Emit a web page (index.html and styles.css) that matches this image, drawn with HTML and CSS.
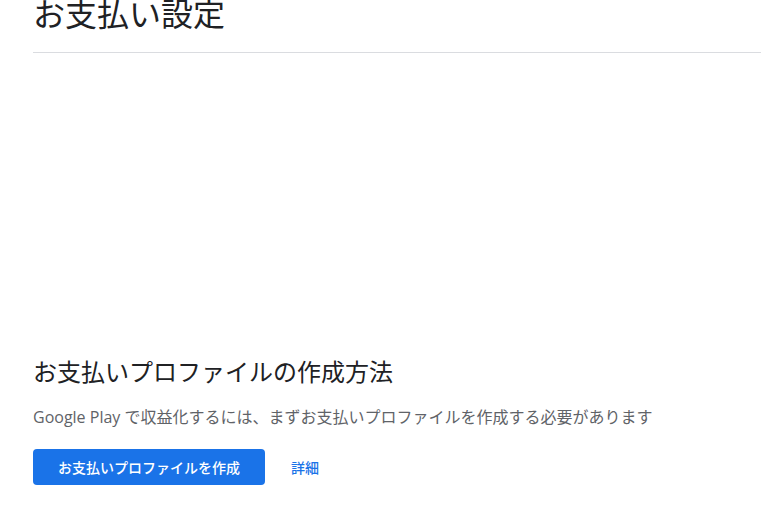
FILE: index.html
```html
<!DOCTYPE html>
<html lang="ja">
<head>
<meta charset="utf-8">
<title>お支払い設定</title>
<link rel="stylesheet" href="styles.css">
</head>
<body>
<main class="page">
  <header class="page-header">
    <h1 class="page-title">お支払い設定</h1>
  </header>
  <section class="setup">
    <h2 class="setup-title">お支払いプロファイルの作成方法</h2>
    <p class="setup-text">Google Play で収益化するには、まずお支払いプロファイルを作成する必要があります</p>
    <div class="actions">
      <button class="btn-primary" type="button">お支払いプロファイルを作成</button>
      <a class="link" href="#">詳細</a>
    </div>
  </section>
</main>
</body>
</html>
```
FILE: styles.css
```css
* { box-sizing: border-box; }
html, body { margin: 0; padding: 0; background: #fff; }
body {
  font-family: Roboto, "Noto Sans CJK JP", sans-serif;
  color: #202124;
  overflow: hidden;
}
.page {
  padding-left: 33px;
}
.page-header {
  border-bottom: 1px solid #dadce0;
  margin-top: -1px;
  padding-bottom: 21px;
}
.page-title {
  margin: 0;
  font-size: 32px;
  line-height: 32px;
  font-weight: 400;
  color: #202124;
}
.setup {
  padding-top: 304px;
}
.setup-title {
  margin: 0;
  font-size: 24px;
  line-height: 32px;
  font-weight: 400;
  color: #202124;
}
.setup-text {
  margin: 16px 0 0;
  font-family: "Open Sans", "Noto Sans CJK JP", sans-serif;
  font-size: 16px;
  line-height: 24px;
  color: #5f6368;
}
.actions {
  margin-top: 20px;
  display: flex;
  align-items: center;
  gap: 26px;
}
.btn-primary {
  height: 36px;
  width: 232px;
  border: 0;
  border-radius: 4px;
  background: #1a73e8;
  color: #fff;
  font-family: Roboto, "Noto Sans CJK JP", sans-serif;
  font-size: 14px;
  font-weight: 500;
  padding: 0 24px;
}
.link {
  color: #1a73e8;
  text-decoration: none;
  font-size: 14px;
  font-weight: 500;
}
```
